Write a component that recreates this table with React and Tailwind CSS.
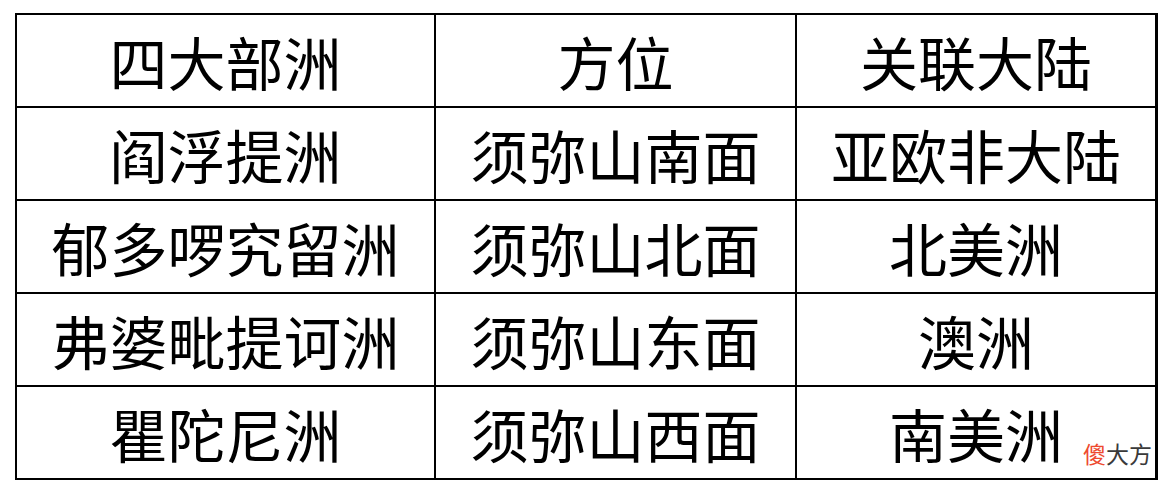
import React from "react";

const rows = [
  ["四大部洲", "方位", "关联大陆"],
  ["阎浮提洲", "须弥山南面", "亚欧非大陆"],
  ["郁多啰究留洲", "须弥山北面", "北美洲"],
  ["弗婆毗提诃洲", "须弥山东面", "澳洲"],
  ["瞿陀尼洲", "须弥山西面", "南美洲"],
];

export default function App() {
  return (
    <div className="relative w-[1172px] h-[494px] bg-white overflow-hidden" style={{ fontFamily: '"Noto Sans CJK SC", "Noto Sans CJK JP", sans-serif' }}>
      <div className="ml-[15px] mt-[13px] w-[1143px] border-t-2 border-l-2 border-black grid grid-cols-[419px_361px_361px]">
        {rows.map((r, i) =>
          r.map((c, j) => (
            <div
              key={i + "-" + j}
              className={`h-[93px] border-b-2 border-black flex items-center justify-center text-[58px] leading-none text-black ${j === 2 ? "border-r-[3px]" : "border-r-2"}`}
            >
              {c}
            </div>
          ))
        )}
      </div>
      <div className="absolute left-[1083px] top-[442px] text-[23px] leading-none">
        <span className="text-[#ee4a2f]">傻</span>
        <span className="text-[#3a3a3a]">大方</span>
      </div>
    </div>
  );
}
